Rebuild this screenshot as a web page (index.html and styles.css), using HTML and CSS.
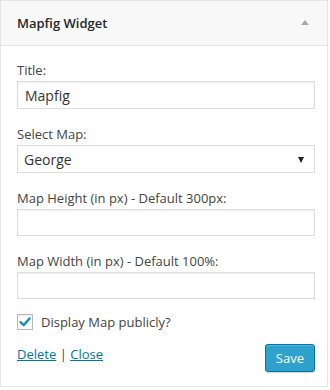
FILE: index.html
```html
<!DOCTYPE html>
<html lang="en">
<head>
  <meta charset="UTF-8">
  <title>Mapfig Widget</title>
  <link rel="stylesheet" href="styles.css">
</head>
<body>
  <div class="widget">
    <div class="widget-top">
      <span class="widget-title">Mapfig Widget</span>
      <span class="toggle-arrow"></span>
    </div>

    <div class="widget-inside">
      <div class="field">
        <label for="title">Title:</label>
        <input type="text" id="title" class="widefat" value="Mapfig">
      </div>

      <div class="field">
        <label for="map">Select Map:</label>
        <div class="select-wrap">
          <select id="map" class="widefat">
            <option>George</option>
          </select>
        </div>
      </div>

      <div class="field">
        <label for="height">Map Height (in px) - Default 300px:</label>
        <input type="text" id="height" class="widefat short">
      </div>

      <div class="field">
        <label for="width">Map Width (in px) - Default 100%:</label>
        <input type="text" id="width" class="widefat short">
      </div>

      <div class="check-row">
        <span class="checkbox">
          <svg width="14" height="14" viewBox="0 0 14 14"><path d="M2.5 7.2 L5.6 10.2 L11.6 3.4" fill="none" stroke="#1e8cbe" stroke-width="2.4" stroke-linecap="round" stroke-linejoin="round"/></svg>
        </span>
        <span>Display Map publicly?</span>
      </div>

      <div class="widget-control">
        <div class="actions">
          <a href="#">Delete</a> <span class="sep">|</span> <a href="#">Close</a>
        </div>
        <button class="button-primary">Save</button>
      </div>
    </div>
  </div>
</body>
</html>
```

FILE: styles.css
```css
body {
  margin: 0;
  padding: 0;
  background: #fff;
  font-family: 'Open Sans', sans-serif;
  font-size: 13px;
  color: #444;
}
.widget {
  width: 326px;
  border: 1px solid #e5e5e5;
  background: #fff;
  box-shadow: 0 1px 1px rgba(0, 0, 0, 0.04);
}
.widget-top {
  height: 44px;
  display: flex;
  align-items: center;
  justify-content: space-between;
  padding: 0 18px 0 16px;
  background: #f8f8f8;
  border-bottom: 1px solid #e5e5e5;
}
.widget-title {
  font-weight: 600;
  font-size: 13px;
  color: #23282d;
}
.toggle-arrow {
  width: 0;
  height: 0;
  border-left: 4px solid transparent;
  border-right: 4px solid transparent;
  border-bottom: 5px solid #aaa;
  margin-top: -1px;
}
.widget-inside {
  padding: 15px 12px 14px 16px;
}
.field {
  margin-bottom: 16px;
}
.field label {
  display: block;
  line-height: 18px;
  margin-bottom: 2px;
}
.widefat {
  display: block;
  box-sizing: border-box;
  width: 100%;
  height: 28px;
  margin: 0;
  padding: 0 7px;
  border: 1px solid #ddd;
  border-radius: 0;
  background: #fff;
  box-shadow: inset 0 1px 2px rgba(0, 0, 0, 0.07);
  font-family: 'Open Sans', sans-serif;
  font-size: 14px;
  color: #333;
  outline: none;
}
.widefat.short {
  height: 27px;
}
.select-wrap {
  position: relative;
}
.select-wrap select {
  appearance: none;
  -webkit-appearance: none;
  padding-left: 6px;
  box-shadow: none;
}
.select-wrap::after {
  content: "";
  position: absolute;
  right: 11px;
  top: 12px;
  border-left: 3px solid transparent;
  border-right: 3px solid transparent;
  border-top: 6px solid #222;
}
.check-row {
  display: flex;
  align-items: center;
  gap: 8px;
  margin-top: -1px;
  line-height: 16px;
}
.checkbox {
  width: 14px;
  height: 14px;
  border: 1px solid #b4b9be;
  background: #fff;
  box-shadow: inset 0 1px 2px rgba(0, 0, 0, 0.1);
  display: flex;
  align-items: center;
  justify-content: center;
}
.widget-control {
  display: flex;
  justify-content: space-between;
  align-items: flex-start;
  margin-top: 14px;
}
.actions {
  line-height: 18px;
  padding-top: 1px;
}
.actions a {
  color: #0074a2;
  text-decoration: underline;
}
.sep {
  color: #444;
}
.button-primary {
  height: 28px;
  padding: 0 10px;
  border: 1px solid #0074a2;
  border-radius: 3px;
  background: #2ea2cc;
  box-shadow: inset 0 1px 0 rgba(120, 200, 230, 0.5), 0 1px 0 rgba(0, 0, 0, 0.15);
  color: #fff;
  font-family: 'Open Sans', sans-serif;
  font-size: 13px;
}
```
